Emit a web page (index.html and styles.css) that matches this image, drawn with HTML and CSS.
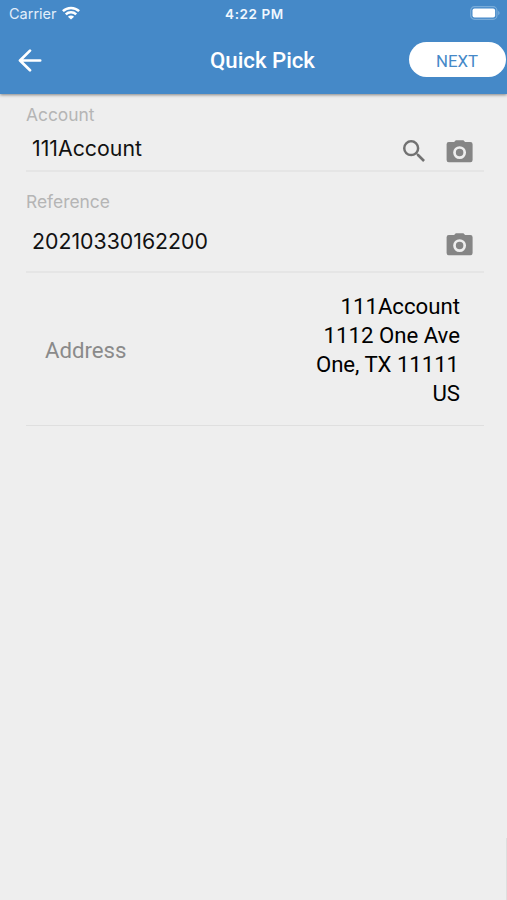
FILE: index.html
```html
<!DOCTYPE html>
<html lang="en">
<head>
<meta charset="utf-8">
<title>Quick Pick</title>
<link rel="stylesheet" href="styles.css">
</head>
<body>
<header class="header">
  <div class="status">
    <div class="status-left">
      <span class="carrier">Carrier</span>
      <svg class="wifi" viewBox="0 0 18 14" width="18" height="14" fill="none" stroke="#fff" stroke-width="2.5">
        <path d="M.9 5.2C5.4.8 12.6.8 17.1 5.2M3.8 8.3c2.9-2.8 7.5-2.8 10.4 0"/>
        <path d="M9 13.6 5.9 10.7c1.7-1.6 4.5-1.6 6.2 0z" fill="#fff" stroke="none"/>
      </svg>
    </div>
    <span class="time">4:22 PM</span>
    <svg class="battery" viewBox="0 0 30 14" width="30" height="14">
      <rect x=".7" y=".7" width="26.2" height="12.6" rx="3.8" fill="none" stroke="#79acd9" stroke-width="1.2"/>
      <rect x="2.5" y="2.4" width="22.6" height="9.2" rx="2" fill="#fff"/>
      <path d="M28.1 4.9c2 .7 2 3.5 0 4.2z" fill="#79acd9"/>
    </svg>
  </div>
  <div class="toolbar">
    <svg class="back" viewBox="0 0 24 24" width="24" height="24" fill="none" stroke="#fff" stroke-width="2.7" stroke-linecap="round" stroke-linejoin="round">
      <path d="M22.2 12.5H2.2M12 2.6 2 12.5 12 22.3"/>
    </svg>
    <h1 class="title">Quick Pick</h1>
    <button class="next">NEXT</button>
  </div>
</header>
<main class="form">
  <section class="field account">
    <div class="label">Account</div>
    <div class="row">
      <span class="value">111Account</span>
      <svg class="search" viewBox="3 3 17.5 17.5" width="22" height="22" fill="#717171">
        <path d="M15.5 14h-.79l-.28-.27A6.47 6.47 0 0 0 16 9.5 6.5 6.5 0 1 0 9.5 16c1.61 0 3.09-.59 4.23-1.57l.27.28v.79l5 4.99L20.49 19l-4.99-5zm-6 0C7.01 14 5 11.99 5 9.5S7.01 5 9.5 5 14 7.01 14 9.5 11.99 14 9.5 14z"/>
      </svg>
      <svg class="camera" viewBox="0 0 26 23" width="26" height="23">
        <path d="M1.8 2H7.1L8.8.3h7.6L18.1 2h5.3q2.2 0 2.2 2.200v15.900q0 2.200-2.200 2.200H1.800Q-.4 22.300-.4 20.100V4.200Q-.4 2 1.800 2z" fill="#858585"/>
        <circle cx="12.6" cy="12.6" r="5.1" fill="#858585" stroke="#eee" stroke-width="2.7"/>
      </svg>
    </div>
  </section>
  <section class="field reference">
    <div class="label">Reference</div>
    <div class="row">
      <span class="value">20210330162200</span>
      <svg class="camera" viewBox="0 0 26 23" width="26" height="23">
        <path d="M1.8 2H7.1L8.8.3h7.6L18.1 2h5.3q2.2 0 2.2 2.200v15.900q0 2.200-2.200 2.200H1.800Q-.4 22.300-.4 20.100V4.200Q-.4 2 1.800 2z" fill="#858585"/>
        <circle cx="12.6" cy="12.6" r="5.1" fill="#858585" stroke="#eee" stroke-width="2.7"/>
      </svg>
    </div>
  </section>
  <section class="address">
    <span class="address-label">Address</span>
    <div class="address-lines">
      <div>111Account</div>
      <div>1112 One Ave</div>
      <div class="city">One, TX 11111</div>
      <div>US</div>
    </div>
  </section>
</main>
<div class="edge"></div>
</body>
</html>
```

FILE: styles.css
```css
* { box-sizing: border-box; }
body {
  margin: 0;
  height: 900px;
  background: #eee;
  color: #111;
  font-family: Roboto, "Liberation Sans", sans-serif;
  display: flex;
  flex-direction: column;
  overflow: hidden;
}
.header {
  height: 94px;
  flex: none;
  background: #4589c8;
  color: #fff;
  box-shadow: 0 1px 3px rgba(0, 0, 0, .45);
}
.status {
  height: 27px;
  padding: 0 7px 0 9px;
  display: grid;
  grid-template-columns: 1fr auto 1fr;
  align-items: center;
  font-family: Inter, "Liberation Sans", sans-serif;
}
.status-left { display: flex; align-items: center; gap: 5px; }
.carrier { font-size: 14.5px; line-height: 27px; color: #e2eefa; }
.wifi { margin-top: -1px; }
.time { font-size: 13.5px; font-weight: 600; letter-spacing: .6px; color: #f0f7ff; }
.battery { justify-self: end; margin-top: -1px; }
.toolbar {
  height: 67px;
  padding: 0 1px 0 18px;
  display: grid;
  grid-template-columns: 1fr auto 1fr;
  align-items: center;
}
.title { margin: 0 -1px 0 0; font-size: 22.2px; font-weight: 500; line-height: 67px; }
.back { margin-bottom: 1px; }
.next {
  justify-self: end;
  width: 97px;
  height: 35px;
  margin-bottom: 2px;
  padding: 0 1px 0 0;
  border: 0;
  border-radius: 18px;
  background: #fff;
  color: #4589c8;
  font: 400 16.8px/39px Roboto, sans-serif;
}
.form { padding: 0 23px 0 26px; }
.field { border-bottom: 2px solid #e5e5e5; }
.account { height: 78px; padding-top: 10px; }
.reference { height: 101px; padding-top: 19px; }
.label {
  height: 22px;
  font: 400 17.4px/22px Inter, sans-serif;
  color: #b5b5b5;
}
.row { display: flex; align-items: flex-end; padding: 0 11px 0 6px; }
.account .row { height: 37px; }
.reference .row { height: 43px; }
.camera { overflow: visible; }
.row .value { flex: 1; padding-bottom: 2px; font: 400 21.3px/26px Inter, sans-serif; }
.search { margin-right: 22px; margin-bottom: 1px; }
.address {
  height: 153px;
  padding: 1px 24px 0 19px;
  border-bottom: 1px solid #dfdfdf;
  display: flex;
  align-items: center;
  justify-content: space-between;
  font-size: 22.2px;
  line-height: 29px;
}
.address-label { padding-top: 1px; color: #8a8a8a; }
.address-lines { text-align: right; color: #000; }
.city { padding-right: 1px; letter-spacing: -.05px; }
.edge {
  width: 1px;
  height: 62px;
  margin: auto 0 0 auto;
  background: #dedede;
}
```
